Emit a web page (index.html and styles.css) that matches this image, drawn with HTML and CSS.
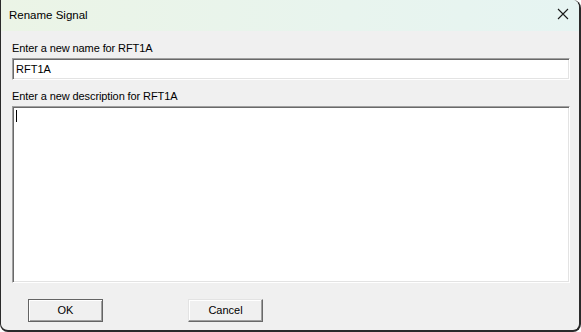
FILE: index.html
```html
<!DOCTYPE html>
<html>
<head>
<meta charset="utf-8">
<link rel="stylesheet" href="styles.css">
</head>
<body>
<div class="window">
  <div class="titlebar">
    <span class="title">Rename Signal</span>
    <svg class="close" width="12" height="12" viewBox="0 0 12 12"><path d="M1 1 L11 11 M11 1 L1 11" stroke="#1a1a1a" stroke-width="1.1" fill="none"/></svg>
  </div>
  <div class="content">
    <div class="label">Enter a new name for RFT1A</div>
    <div class="field name">RFT1A</div>
    <div class="label second">Enter a new description for RFT1A</div>
    <div class="field desc"><span class="caret"></span></div>
    <div class="buttons">
      <div class="btn default">OK</div>
      <div class="btn">Cancel</div>
    </div>
  </div>
</div>
</body>
</html>
```
FILE: styles.css
```css
html, body {
  margin: 0;
  padding: 0;
  background: #ffffff;
}
.window {
  width: 581px;
  height: 332px;
  box-sizing: border-box;
  background: #f0f0f0;
  border-left: 1px solid #2a2a2a;
  border-right: 2px solid #2a2a2a;
  border-bottom: 2px solid #2a2a2a;
  border-radius: 0 8px 8px 8px;
  overflow: hidden;
  display: flex;
  flex-direction: column;
  font-family: "Liberation Sans", Arial, sans-serif;
}
.titlebar {
  height: 31px;
  flex: none;
  background: linear-gradient(90deg, #ebf4e6 0%, #e8f4ee 60%, #e6f4f2 100%);
  display: flex;
  align-items: center;
  justify-content: space-between;
  padding: 0 10px 0 8px;
}
.title {
  font-size: 11.5px;
  color: #000;
  margin-top: -1px;
}
.close {
  display: block;
  margin-top: -3px;
}
.content {
  padding: 11px 9px 0 11px;
  display: flex;
  flex-direction: column;
  font-size: 11px;
  color: #000;
}
.label {
  height: 13px;
  line-height: 13px;
  letter-spacing: -0.1px;
}
.label.second {
  margin-top: 10px;
}
.field {
  margin-top: 3px;
  box-sizing: border-box;
  background: #fff;
  border-style: solid;
  border-width: 1px;
  border-color: #a0a0a0 #ffffff #ffffff #a0a0a0;
  box-shadow: inset 1px 1px 0 #696969, inset -1px -1px 0 #e3e3e3;
}
.field.name {
  height: 22px;
  line-height: 20px;
  padding-left: 3px;
}
.field.desc {
  height: 177px;
  padding: 3px 0 0 3px;
}
.caret {
  display: block;
  width: 1px;
  height: 12px;
  background: #000;
}
.buttons {
  margin-top: 16px;
  padding-left: 16px;
  display: flex;
  gap: 85px;
}
.btn {
  width: 75px;
  height: 23px;
  box-sizing: border-box;
  text-align: center;
  line-height: 21px;
  font-size: 11px;
  background: #f0f0f0;
  border-style: solid;
  border-width: 1px;
  border-color: #e3e3e3 #696969 #696969 #e3e3e3;
  box-shadow: inset -1px -1px 0 #a0a0a0, inset 1px 1px 0 #ffffff;
}
.btn.default {
  border-color: #646464;
  box-shadow: inset 1px 1px 0 #ffffff, inset -1px -1px 0 #a0a0a0;
}
```
